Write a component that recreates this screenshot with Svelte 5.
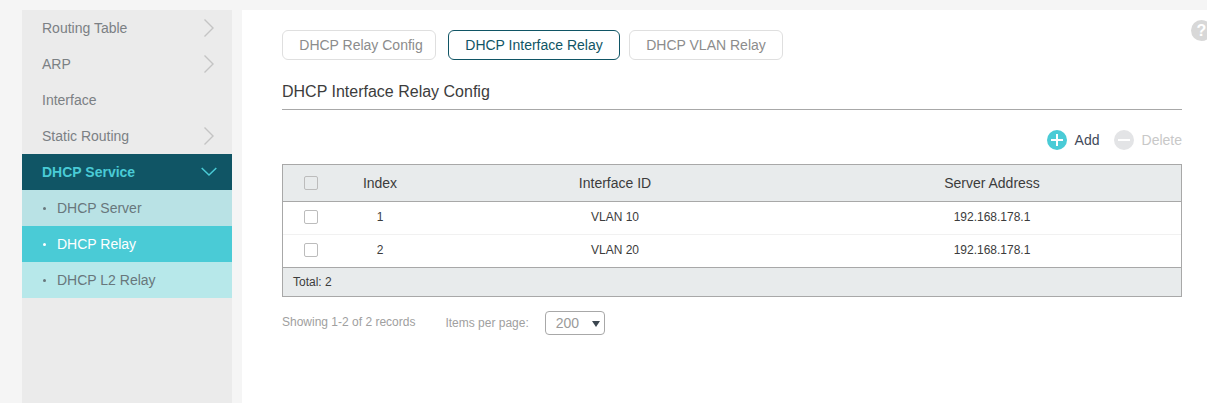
<script>
	const menu = [
		{ label: 'Routing Table', arrow: true },
		{ label: 'ARP', arrow: true },
		{ label: 'Interface', arrow: false },
		{ label: 'Static Routing', arrow: true }
	];
	const subs = [
		{ label: 'DHCP Server', cls: 'server' },
		{ label: 'DHCP Relay', cls: 'active' },
		{ label: 'DHCP L2 Relay', cls: 'l2' }
	];
	const tabs = [
		{ label: 'DHCP Relay Config', w: 154 },
		{ label: 'DHCP Interface Relay', w: 172, on: true },
		{ label: 'DHCP VLAN Relay', w: 154 }
	];
	const rows = [
		{ index: 1, iface: 'VLAN 10', addr: '192.168.178.1' },
		{ index: 2, iface: 'VLAN 20', addr: '192.168.178.1' }
	];
</script>

<div class="page">
	<aside class="sidebar">
		{#each menu as item}
			<div class="item">
				<span>{item.label}</span>
				{#if item.arrow}
					<svg class="chev" width="12" height="20" viewBox="0 0 12 20"><path d="M1.5 1.5 L10 10 L1.5 18.5" /></svg>
				{/if}
			</div>
		{/each}
		<div class="item open">
			<span>DHCP Service</span>
			<svg class="down" width="16" height="10" viewBox="0 0 16 10"><path d="M0.7 1 L8 8 L15.3 1" /></svg>
		</div>
		{#each subs as sub}
			<div class="sub {sub.cls}"><i></i>{sub.label}</div>
		{/each}
	</aside>

	<main class="content">
		<div class="tabs">
			{#each tabs as tab}
				<button class="tab" class:on={tab.on} style="width:{tab.w}px">{tab.label}</button>
			{/each}
		</div>

		<h2>DHCP Interface Relay Config</h2>

		<div class="tools">
			<span class="tool">
				<svg width="20" height="20" viewBox="0 0 20 20"><circle cx="10" cy="10" r="10" fill="#4acbd6" /><path d="M10 4v12M4 10h12" stroke="#fff" stroke-width="2" /></svg>
				Add
			</span>
			<span class="tool off">
				<svg width="20" height="20" viewBox="0 0 20 20"><circle cx="10" cy="10" r="10" fill="#e3e4e6" /><path d="M4 10h12" stroke="#fff" stroke-width="2" /></svg>
				Delete
			</span>
		</div>

		<div class="table">
			<div class="row head">
				<div class="c-check"><span class="box"></span></div>
				<div class="c-index">Index</div>
				<div class="c-iface">Interface ID</div>
				<div class="c-addr">Server Address</div>
			</div>
			{#each rows as r}
				<div class="row body">
					<div class="c-check"><span class="box"></span></div>
					<div class="c-index">{r.index}</div>
					<div class="c-iface">{r.iface}</div>
					<div class="c-addr">{r.addr}</div>
				</div>
			{/each}
			<div class="total">Total: 2</div>
		</div>

		<div class="pager">
			<span class="records">Showing 1-2 of 2 records</span>
			<span class="per">Items per page:</span>
			<span class="select">200<b></b></span>
		</div>

		<div class="help">?</div>
	</main>
</div>

<style>
	:global(body) {
		margin: 0;
		background: #f5f5f5;
	}

	.page {
		display: flex;
		height: 393px;
		padding: 10px 0 0 22px;
		font-family: 'Liberation Sans', Arial, sans-serif;
		overflow: hidden;
		width: 1185px;
	}

	.sidebar {
		width: 210px;
		background: #ebebeb;
		flex: none;
		font-size: 14px;
	}

	.item {
		height: 36px;
		display: flex;
		align-items: center;
		justify-content: space-between;
		padding: 0 17px 0 20px;
		color: #7b8084;
	}

	.chev path {
		fill: none;
		stroke: #c4c4c4;
		stroke-width: 1.4;
	}

	.open {
		background: #105565;
		color: #4acbd6;
		font-weight: bold;
		padding-right: 15px;
	}

	.down path {
		fill: none;
		stroke: #4acbd6;
		stroke-width: 1.5;
	}

	.sub {
		height: 36px;
		display: flex;
		align-items: center;
		padding-left: 21px;
		color: #68777c;
	}

	.sub i {
		width: 3px;
		height: 3px;
		border-radius: 50%;
		background: currentColor;
		margin-right: 11px;
	}

	.server {
		background: #b9e2e5;
	}

	.active {
		background: #4acbd6;
		color: #fff;
	}

	.l2 {
		background: #b7e8ea;
	}

	.content {
		position: relative;
		margin-left: 10px;
		flex: none;
		width: 965px;
		box-sizing: border-box;
		background: #fff;
		padding: 20px 25px 0 40px;
	}

	.tabs {
		display: flex;
	}

	.tab {
		height: 30px;
		box-sizing: border-box;
		margin-right: 10px;
		padding: 0;
		background: #fff;
		border: 1px solid #dfdfdf;
		border-radius: 6px;
		font: 14px 'Liberation Sans', Arial, sans-serif;
		color: #8c8c8c;
	}

	.tab:first-child {
		margin-right: 12px;
		padding-left: 4px;
	}

	.tab.on {
		margin-right: 9px;
		border-color: #105565;
		color: #105565;
	}

	h2 {
		margin: 20px 0 0;
		height: 30px;
		box-sizing: border-box;
		padding-top: 2px;
		border-bottom: 1px solid #a8a8a8;
		font-weight: normal;
		font-size: 16px;
		line-height: 19px;
		color: #3c3c3c;
	}

	.tools {
		display: flex;
		justify-content: flex-end;
		gap: 14px;
		margin-top: 20px;
		height: 20px;
		font-size: 14px;
		color: #3f4a5a;
	}

	.tool {
		display: flex;
		align-items: center;
		gap: 8px;
	}

	.tool.off {
		color: #c8c8c8;
	}

	.table {
		margin-top: 14px;
		border: 1px solid #a8a8a8;
		height: 133px;
		box-sizing: border-box;
		display: flex;
		flex-direction: column;
		font-size: 12px;
		color: #3c3c3c;
	}

	.row {
		display: grid;
		grid-template-columns: 56px 82px 388px 366px;
		align-items: center;
		text-align: center;
	}

	.head {
		height: 37px;
		background: #e8ebec;
		border-bottom: 1px solid #a8a8a8;
		box-sizing: border-box;
		font-size: 14px;
	}

	.body {
		height: 33px;
		box-sizing: border-box;
		padding-bottom: 2px;
		border-bottom: 1px solid #f1f1f1;
	}

	.body:nth-child(3) {
		border-bottom-color: #a8a8a8;
	}

	.box {
		display: block;
		width: 12px;
		height: 12px;
		margin-left: 21px;
		background: #fff;
		border: 1px solid #bcbcbc;
		border-radius: 2px;
	}

	.head .box {
		background: #e8ebec;
	}

	.total {
		flex: 1;
		display: flex;
		align-items: center;
		padding-left: 10px;
		background: #e8ebec;
	}

	.pager {
		display: flex;
		align-items: center;
		margin-top: 14px;
		font-size: 12px;
		color: #a0a0a0;
	}

	.records {
		position: relative;
		top: -1px;
	}

	.per {
		margin-left: 30px;
	}

	.select {
		margin-left: 16px;
		width: 60px;
		height: 24px;
		box-sizing: border-box;
		border: 1px solid #a8a8a8;
		border-radius: 4px;
		display: flex;
		align-items: center;
		justify-content: space-between;
		padding: 0 4px 0 10px;
		font-size: 14px;
		color: #9a9a9a;
	}

	.select b {
		width: 0;
		height: 0;
		border-left: 4.5px solid transparent;
		border-right: 4.5px solid transparent;
		border-top: 6px solid #3c4650;
		margin-top: 1px;
	}

	.help {
		position: absolute;
		top: 10px;
		left: 949px;
		width: 21px;
		height: 21px;
		border-radius: 50%;
		background: #d8d8d8;
		color: #fff;
		font-size: 16px;
		font-weight: bold;
		line-height: 21px;
		text-align: center;
	}
</style>
